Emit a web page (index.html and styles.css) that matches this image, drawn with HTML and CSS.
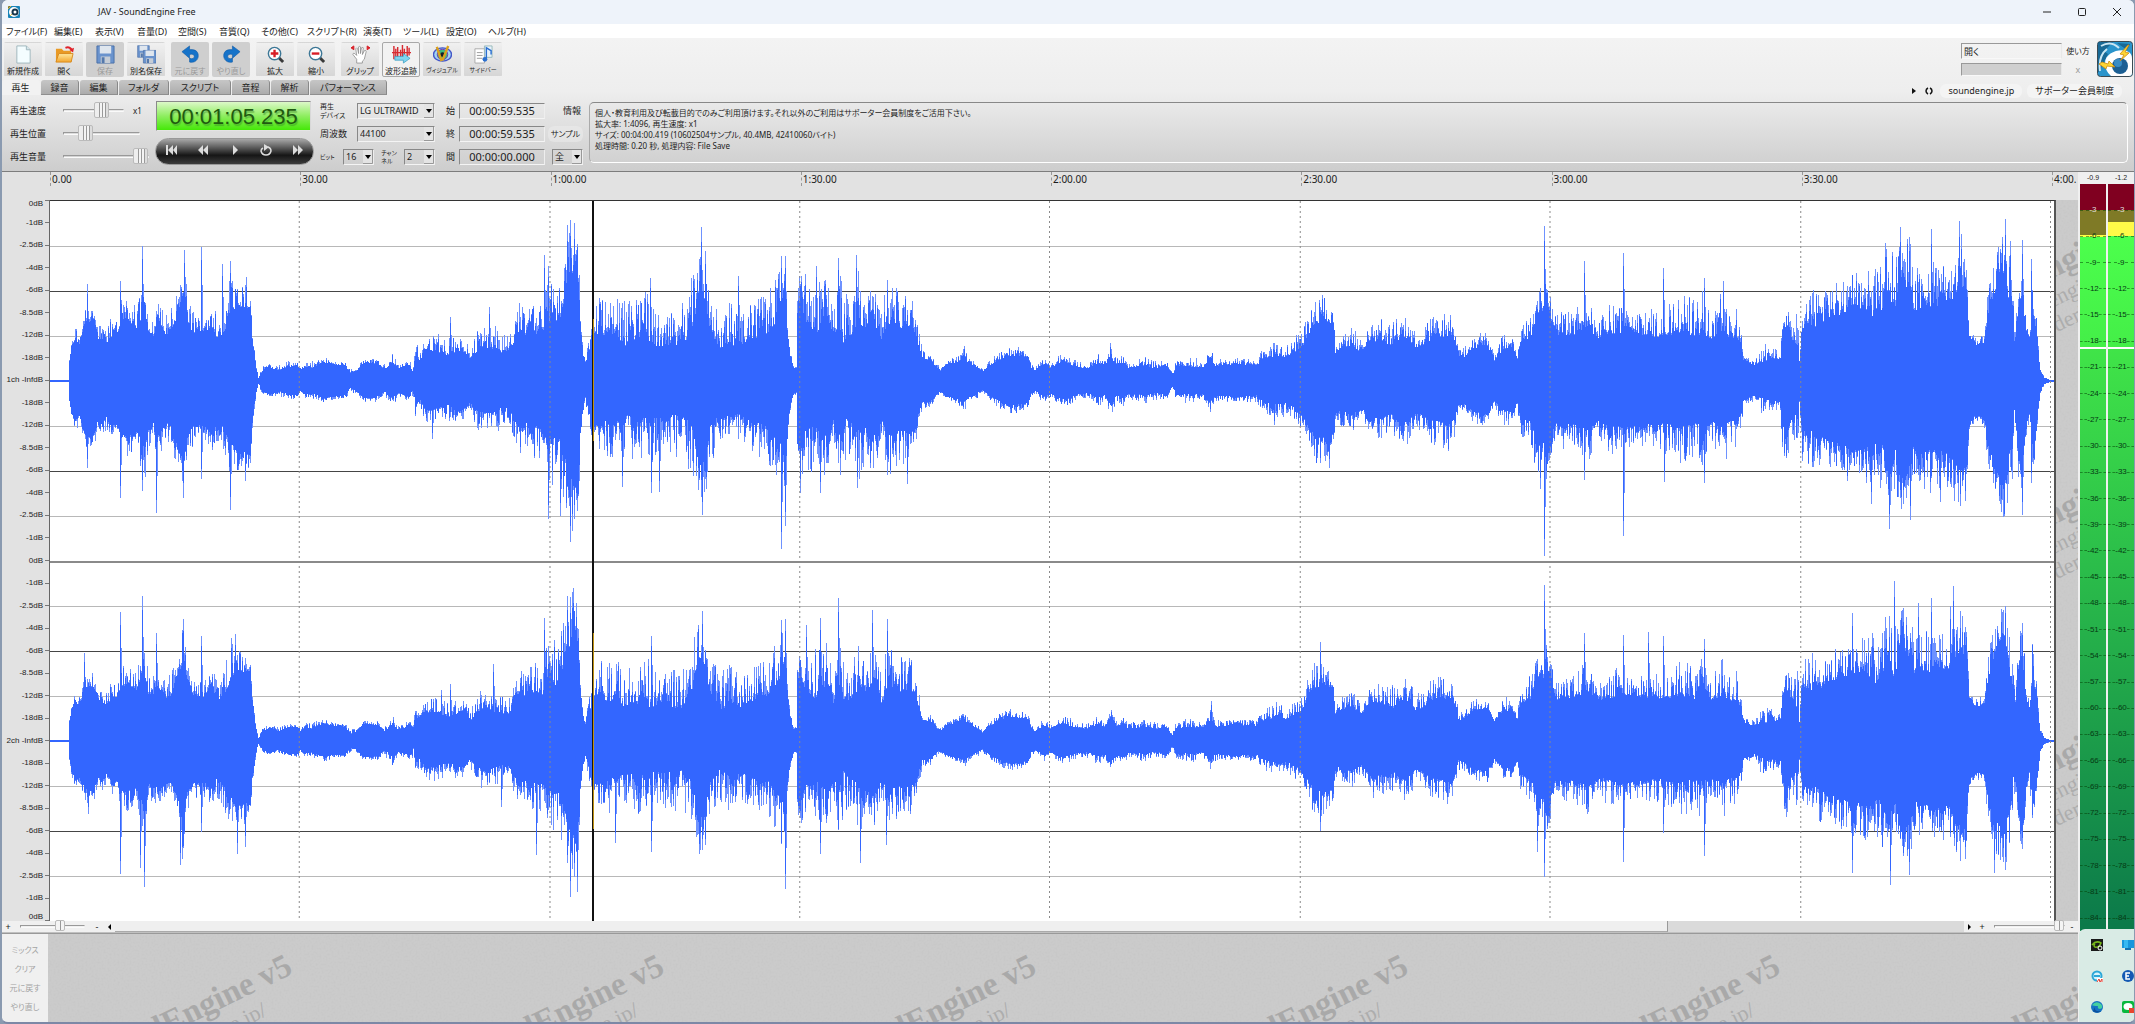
FILE: index.html
```html
<!DOCTYPE html>
<html lang="ja">
<head>
<meta charset="utf-8">
<title>JAV - SoundEngine Free</title>
<link rel="stylesheet" href="styles.css">
</head>
<body>
<svg class="defs" width="0" height="0" aria-hidden="true">
  <defs>
    <filter id="grain" x="0" y="0" width="100%" height="100%">
      <feTurbulence type="fractalNoise" baseFrequency="0.5" numOctaves="2" seed="4"/>
      <feColorMatrix type="matrix" values="0 0 0 0 0.55  0 0 0 0 0.55  0 0 0 0 0.55  1.4 0 0 0 -0.6"/>
    </filter>
    <linearGradient id="folder" x1="0" y1="0" x2="0" y2="1"><stop offset="0" stop-color="#ffe9a0"/><stop offset="1" stop-color="#f3a52c"/></linearGradient>
    <g id="mark">
      <g transform="rotate(-26)"><text class="mark-name" text-anchor="end">SoundEngine v5</text></g>
      <g transform="translate(-26 42) rotate(-26)"><text class="mark-url" text-anchor="end">http://soundengine.jp/</text></g>
      <g transform="translate(-4 58) rotate(-26)"><text class="mark-url" text-anchor="end">powered by coderium.com</text></g>
    </g>
    <g id="disk"><path d="M1 1h18v18H1z" fill="#6a93cd" stroke="#4a70a8"/><path d="M4 1h12v8H4z" fill="#dfe6ee"/><path d="M5 12h10v7H5z" fill="#c6cdd6"/><path d="M6 13h3v6H6z" fill="#5579ac"/></g>
  </defs>
</svg>

<div class="window">
  <header class="titlebar">
    <svg class="app-icon" viewBox="0 0 12 12"><rect width="12" height="12" rx="1" fill="#1883b8"/><circle cx="6" cy="6" r="5" fill="#fff"/><circle cx="7" cy="6" r="3.500" fill="#16354a"/><circle cx="7" cy="6" r="1.500" fill="#fff"/><path d="M0 3 3 0H0zM2 10l2-2" stroke="#d8b43a" fill="#0b3c55"/></svg>
    <h1 class="title">JAV - SoundEngine Free</h1>
    <div class="window-buttons">
      <button aria-label="最小化"><svg viewBox="0 0 10 10"><path d="M1 5h8"/></svg></button>
      <button aria-label="最大化"><svg viewBox="0 0 10 10"><rect x="1.500" y="1.500" width="7" height="7" rx="1"/></svg></button>
      <button aria-label="閉じる"><svg viewBox="0 0 10 10"><path d="m1 1 8 8M9 1 1 9"/></svg></button>
    </div>
  </header>

  <nav class="menu">
    <a href="#">ファイル(F)</a><a href="#">編集(E)</a><a href="#">表示(V)</a><a href="#">音量(D)</a><a href="#">空間(S)</a><a href="#">音質(Q)</a><a href="#">その他(C)</a><a href="#">スクリプト(R)</a><a href="#">演奏(T)</a><a href="#">ツール(L)</a><a href="#">設定(O)</a><a href="#">ヘルプ(H)</a>
  </nav>

  <div class="head">
    <div class="toolbar">
      <div class="tool-group">
        <button class="tool"><svg viewBox="0 0 20 20"><path d="M3 1h10l4 4v14H3z" fill="#f4fdff" stroke="#9fb6bd"/><path d="M13 1v4h4" fill="#d5e6ea" stroke="#9fb6bd"/></svg>新規作成</button>
        <button class="tool"><svg viewBox="0 0 20 20"><path d="M1 4h6l2 2h8v12H1z" fill="#e99a25"/><path d="m1 18 3-9h15l-2 9z" fill="url(#folder)" stroke="#d88a1d"/><path d="M11 3q5-2 7 3" fill="none" stroke="#e0222a" stroke-width="2"/><path d="m15 5 4 3 1-5z" fill="#e0222a"/></svg>開く</button>
        <button class="tool off" disabled><svg viewBox="0 0 20 20"><use href="#disk"/></svg>保存</button>
        <button class="tool"><svg viewBox="0 0 20 20"><use href="#disk" transform="scale(.68)"/><use href="#disk" transform="translate(6 5) scale(.74)"/></svg>別名保存</button>
      </div>
      <div class="tool-group">
        <button class="tool off" disabled><svg viewBox="0 0 20 20"><path d="m1 7 8-6v4c7-1 10 3 9 8-1 4-5 6-9 5v-4c3 1 5 0 5-2s-2-3-5-2v4z" fill="#1673c9" stroke="#0d58a6" stroke-width=".6"/></svg>元に戻す</button>
        <button class="tool off" disabled><svg viewBox="0 0 20 20"><path d="m19 7-8-6v4C4 4 1 8 2 13c1 4 5 6 9 5v-4c-3 1-5 0-5-2s2-3 5-2v4z" fill="#1673c9" stroke="#0d58a6" stroke-width=".6"/></svg>やり直し</button>
      </div>
      <div class="tool-group">
        <button class="tool"><svg viewBox="0 0 20 20"><path d="m13 13 5 5" stroke="#3a3a3a" stroke-width="3"/><circle cx="9" cy="9" r="6.500" fill="#fff" stroke="#3d7796" stroke-width="1.500"/><path d="M9 5v8M5 9h8" stroke="#d81e26" stroke-width="2.500"/></svg>拡大</button>
        <button class="tool"><svg viewBox="0 0 20 20"><path d="m13 13 5 5" stroke="#3a3a3a" stroke-width="3"/><circle cx="9" cy="9" r="6.500" fill="#fff" stroke="#3d7796" stroke-width="1.500"/><path d="M5 9h8" stroke="#d81e26" stroke-width="2.500"/></svg>縮小</button>
      </div>
      <div class="tool-group">
        <button class="tool"><svg viewBox="0 0 20 20"><path d="M6 19v-4L2 10q0-2 2-1l2 2-1-7q1-2 2 0l1 5V2q1-1 2 0v7l1-6q2-1 2 0l-1 7 2-4q2-1 2 1l-2 8-2 2v2z" fill="#fff" stroke="#888" stroke-width=".8"/><path d="m0 3 3-2v4zM20 3l-3-2v4z" fill="#d81e26" stroke="#d81e26"/></svg>グリップ</button>
        <button class="tool on"><svg viewBox="0 0 20 20"><path d="M0 8h20M2 1v14M4 4v9M6 2v13M9 5v8M11 0v15M13 4v7M16 1v12M18 3v8" stroke="#d62a30" stroke-width="1.500"/><path d="M3 12h9V9l7 5-7 5v-3H3z" fill="#7fd4ef" stroke="#3c9ec4" stroke-width=".8"/></svg>波形追跡</button>
        <button class="tool"><svg viewBox="0 0 20 20"><ellipse cx="10" cy="10" rx="9.500" ry="7" fill="#9fd3f0" stroke="#4456c8" stroke-width="1.500"/><circle cx="10" cy="10" r="5.500" fill="#3dbb7c" stroke="#7b2fb0"/><circle cx="10" cy="10" r="2.500" fill="#14202c"/><path d="m4 2 5 15M16 1l-6 15" stroke="#dba11c" stroke-width="2.500"/></svg><span class="tiny">ヴィジュアル</span></button>
        <button class="tool"><svg viewBox="0 0 20 20"><path d="M1 4h10v15H1z" fill="#fff" stroke="#aaa"/><path d="M3 8h6M3 11h6M3 14h6" stroke="#999"/><path d="M11 1h8v12h-8z" fill="#e8f2fb" stroke="#9bb"/><path d="M13 15V3l5 3v4" fill="none" stroke="#2a6fd0" stroke-width="1.500"/><circle cx="11.500" cy="15" r="2.500" fill="#2a6fd0"/></svg><span class="tiny">サイドバー</span></button>
      </div>
      <div class="status">
        <div class="status-grid">
          <output class="status-text">開く</output><button class="pill">使い方</button>
          <div class="status-bar"></div><button class="cancel" disabled>x</button>
        </div>
        <svg class="logo" viewBox="0 0 36 36"><rect x=".5" y=".5" width="35" height="35" rx="3" fill="#2a94cb" stroke="#3c4a52"/><path d="M1 1h15L7 10l4 3-9 18H1zM20 2l13 1-3 6z" fill="#12577d" opacity=".7"/><path d="M4 5q10-6 18 2M3 30Q1 15 10 8" fill="none" stroke="#c9e6f3" stroke-width="2"/><path d="M8 22C8 8 36 4 35 18v14q0 3-3 3H14q-6-5-6-13z" fill="#fff"/><circle cx="23" cy="25" r="8" fill="#1c5f93"/><circle cx="21" cy="22" r="4" fill="#3a8cc4"/><path d="m31 4-8 9 4 1-4 6 9-8-4-1 4-7zM5 21l6 2 1-3 6 6-8-1-1 3-7-5z" fill="#ffd534" stroke="#cc8a12" stroke-width=".8"/></svg>
      </div>
    </div>

    <div class="tabs-row">
      <div class="tabs" role="tablist">
        <button class="tab current" role="tab" aria-selected="true">再生</button><button class="tab" role="tab">録音</button><button class="tab" role="tab">編集</button><button class="tab" role="tab">フォルダ</button><button class="tab" role="tab">スクリプト</button><button class="tab" role="tab">音程</button><button class="tab" role="tab">解析</button><button class="tab" role="tab">パフォーマンス</button>
      </div>
      <div class="links">
        <button aria-label="次へ"><svg viewBox="0 0 8 8"><path d="m2 1 4 3-4 3z" fill="#111"/></svg></button>
        <button aria-label="更新"><svg viewBox="0 0 8 8"><path d="M3 1Q1 2 1 4t2 3M5 1q2 1 2 3T5 7" fill="none" stroke="#111" stroke-width="1.500"/></svg></button>
        <a href="#" class="pill wide">soundengine.jp</a>
        <a href="#" class="pill wide">サポーター会員制度</a>
      </div>
    </div>

    <section class="panel">
      <div class="sliders">
        <label for="speed">再生速度</label><div class="slide"><input id="speed" type="range" value="68"><span class="factor">x1</span></div>
        <label for="pos">再生位置</label><div class="slide"><input id="pos" type="range" value="23"></div>
        <label for="vol">再生音量</label><div class="slide"><input id="vol" type="range" value="100"></div>
      </div>
      <div class="player">
        <output class="lcd">00:01:05.235</output>
        <div class="transport">
          <button aria-label="先頭へ"><svg viewBox="0 0 12 12"><path d="M1 1h2v10H1zM8 1v10L3 6zM12 1v10L8 6z"/></svg></button>
          <button aria-label="巻き戻し"><svg viewBox="0 0 12 12"><path d="M6 1v10L1 6zM11 1v10L6 6z"/></svg></button>
          <button aria-label="再生"><svg viewBox="0 0 12 12"><path d="m4 1 5 5-5 5z"/></svg></button>
          <button aria-label="リピート"><svg viewBox="0 0 12 12"><path d="M8 3q3 1 3 4-1 4-5 4T1 7q0-2 2-3" fill="none" stroke="#ddd" stroke-width="1.500"/><path d="M4 0v7l5-4z"/></svg></button>
          <button aria-label="早送り"><svg viewBox="0 0 12 12"><path d="m1 1 5 5-5 5zM6 1l5 5-5 5z"/></svg></button>
        </div>
      </div>
      <div class="device">
        <label class="two" for="dev">再生<br>デバイス</label><select id="dev"><option>LG ULTRAWID</option></select>
        <label for="rate">周波数</label><select id="rate"><option>44100</option></select>
        <label class="two" for="bit">ビット</label><div class="pair"><select id="bit"><option>16</option></select><label class="two" for="ch">チャン<br>ネル</label><select id="ch"><option>2</option></select></div>
      </div>
      <div class="range">
        <label for="t1">始</label><input id="t1" value="00:00:59.535"><span>情報</span>
        <label for="t2">終</label><input id="t2" value="00:00:59.535"><button class="pill">サンプル</button>
        <label for="t3">間</label><input id="t3" value="00:00:00.000"><select class="all" aria-label="範囲"><option>全</option></select>
      </div>
      <div class="info">
        <p>個人・教育利用及び転載目的でのみご利用頂けます。それ以外のご利用はサポーター会員制度をご活用下さい。</p>
        <p>拡大率: 1:4096, 再生速度: x1</p>
        <p>サイズ: 00:04:00.419 (10602504サンプル, 40.4MB, 42410060バイト)</p>
        <p>処理時間: 0.20 秒, 処理内容: File Save</p>
      </div>
    </section>
  </div>

  <main class="work">
    <div class="left">
      <div class="editor">
        <ol class="scale">
          <li>0dB<li>-1dB<li>-2.5dB<li>-4dB<li>-6dB<li>-8.5dB<li>-12dB<li>-18dB<li>1ch -InfdB<li>-18dB<li>-12dB<li>-8.5dB<li>-6dB<li>-4dB<li>-2.5dB<li>-1dB<li>0dB<li>-1dB<li>-2.5dB<li>-4dB<li>-6dB<li>-8.5dB<li>-12dB<li>-18dB<li>2ch -InfdB<li>-18dB<li>-12dB<li>-8.5dB<li>-6dB<li>-4dB<li>-2.5dB<li>-1dB<li>0dB
        </ol>
        <ol class="ruler"><li>0.00<li>30.00<li>1:00.00<li>1:30.00<li>2:00.00<li>2:30.00<li>3:00.00<li>3:30.00<li>4:00.</ol>
        <svg class="plot" id="plot" viewBox="0 0 2006 720" preserveAspectRatio="none">
          <path class="g-mid" d="M0 45.500h2006M0 135.500h2006M0 225.500h2006M0 315.500h2006M0 405.500h2006M0 495.500h2006M0 585.500h2006M0 675.500h2006"/>
          <path class="g-six" d="M0 90.500h2006M0 270.500h2006M0 450.500h2006M0 630.500h2006"/>
          <path class="g-zero" d="M0 361h2006"/>
          <path class="w-fringe" id="fringe"/>
          <path class="w-body" id="body"/>
          <path class="g-time" d="M249.500 0v720M500.500 0v720M750.500 0v720M1000.500 0v720M1251.500 0v720M1501.500 0v720M1752.500 0v720M2002.500 0v720"/>
          <path class="playhead" d="M544 0v720"/>
          <path class="playhead-on" d="M544 118v122M544 432v196"/>
        </svg>
        <svg class="gutter"><rect width="100%" height="100%" filter="url(#grain)"/><use href="#mark" x="100" y="28"/><use href="#mark" x="100" y="275"/><use href="#mark" x="100" y="522"/><use href="#mark" x="100" y="769"/></svg>
      </div>
      <div class="hbar">
        <button>+</button><input type="range" class="zoom-y" value="64" aria-label="縦ズーム"><button>-</button><button aria-label="左へ"><svg viewBox="0 0 8 8"><path d="M6 1v6L3 4z"/></svg></button>
        <div class="trough"><div class="grip"></div></div>
        <button aria-label="右へ"><svg viewBox="0 0 8 8"><path d="M2 1v6l3-3z"/></svg></button><button>+</button><input type="range" class="zoom-x" value="100" aria-label="横ズーム"><button>-</button>
      </div>
      <div class="mix">
        <div class="mix-buttons"><button disabled>ミックス</button><button disabled>クリア</button><button disabled>元に戻す</button><button disabled>やり直し</button></div>
        <svg class="mix-view"><rect width="100%" height="100%" filter="url(#grain)"/><use href="#mark" x="246" y="39"/><use href="#mark" x="618" y="39"/><use href="#mark" x="990" y="39"/><use href="#mark" x="1362" y="39"/><use href="#mark" x="1734" y="39"/><use href="#mark" x="2106" y="39"/></svg>
      </div>
    </div>
    <div class="meters">
      <div class="meter"><span class="peak">-0.9</span><ol class="levels low"></ol></div>
      <div class="meter"><span class="peak">-1.2</span><ol class="levels high"></ol></div>
    </div>
  </main>

  <aside class="tray">
    <svg viewBox="0 0 12 12"><path d="M0 0h12v12H0z" fill="#191919"/><path d="M1 6q4-5 9-2-2 5-6 4-2-1 0-3" fill="none" stroke="#78b81c" stroke-width="1.500"/><circle cx="9" cy="9" r="2" fill="none" stroke="#fff"/></svg>
    <svg viewBox="0 0 12 12"><path d="M0 1h12v8H0z" fill="#1796dc"/><path d="M2 1h4v8H2z" fill="#35b8f2"/><path d="M3 9h6v2H3z" fill="#1471b0"/></svg>
    <svg viewBox="0 0 12 12"><circle cx="6" cy="6" r="4.500" fill="#d7f3fb" stroke="#2ba7d8" stroke-width="2"/><path d="M3 6h6" stroke="#2ba7d8" stroke-width="2"/><path d="M6 8h6v4H6z" fill="#fff"/><path d="m6 12 2-3 1 3 2-3v3" fill="none" stroke="#e23a2e"/></svg>
    <svg viewBox="0 0 12 12"><circle cx="6" cy="6" r="6" fill="#1459b3"/><path d="M8 3H4v6h4M4 6h3" fill="none" stroke="#fff" stroke-width="1.500"/></svg>
    <svg viewBox="0 0 12 12"><circle cx="6" cy="6" r="6" fill="#1572c4"/><path d="M1 4q4-5 9-1 3 4-1 5-3 0-2-3-5 0-6-1" fill="#45cfa0"/><path d="M4 6q-1 5 6 4-4 3-8 0" fill="#0b4f9b"/></svg>
    <svg viewBox="0 0 12 12"><rect width="12" height="12" rx="2" fill="#09b83e"/><ellipse cx="6" cy="5.500" rx="4.500" ry="3.500" fill="#fff"/><path d="M7 7h5v5H7z" fill="#e8452e"/></svg>
  </aside>
</div>
<script src="wave.js"></script>
</body>
</html>
```
FILE: styles.css
```css
* { box-sizing: border-box; }
body {
  margin: 0;
  height: 100vh;
  background: #8a9ab0;
  font: 9px/12px "Noto Sans", "Noto Sans CJK JP", sans-serif;
  font-feature-settings: "palt";
  color: #1c1c1c;
  overflow: hidden;
}
button, input, select { font: inherit; font-feature-settings: inherit; color: inherit; margin: 0; padding: 0; border: 0; background: none; border-radius: 0; }
a { color: inherit; text-decoration: none; }
ol { list-style: none; margin: 0; padding: 0; }
p { margin: 0; }
.defs { position: absolute; }

.window {
  position: relative;
  display: flex;
  flex-direction: column;
  height: 100vh;
  margin: 0 1px 0 2px;
  border-radius: 6px;
  overflow: hidden;
  background: #f0f0f0;
  border-bottom: 2px solid #7c88a6;
}

/* title bar and menu */
.titlebar { display: flex; align-items: center; flex: none; height: 24px; padding: 0 6px; background: #eef3fa; }
.app-icon { width: 12px; height: 12px; }
.title { flex: 1; margin: 0 0 0 78px; font-size: 9px; font-weight: 400; }
.window-buttons { display: flex; gap: 23px; padding-right: 5px; }
.window-buttons button { width: 12px; height: 12px; }
.window-buttons svg { display: block; width: 10px; height: 10px; margin: 1px; fill: none; stroke: #222; }
.menu {
  display: grid;
  flex: none;
  grid-template-columns: 48px 41px 42px 41px 41px 42px 46px 56px 40px 43px 42px 40px;
  height: 14px;
  padding-left: 4px;
  background: #fff;
  line-height: 15px;
  white-space: nowrap;
}

/* header */
.head { flex: none; background: linear-gradient(#f3f3f3, #eee 40%, #cdcdcd); border-bottom: 1px solid #7d7d7d; }
.toolbar { display: flex; gap: 6px; height: 42px; padding: 4px 1px 3px 2px; }
.tool-group { display: flex; gap: 3px; }
.tool {
  display: flex;
  flex-direction: column;
  align-items: center;
  gap: 1px;
  width: 38px;
  height: 35px;
  padding-top: 2px;
  background: linear-gradient(#f0f0f0, #d6d6d6);
  border: 1px solid transparent;
  border-radius: 2px;
  font-size: 8px;
  line-height: 11px;
  white-space: nowrap;
}
.tool svg { width: 19px; height: 19px; flex: none; }
.tool.off { background: #cfcfcf; color: #9a9a9a; }
.tool.on { border-color: #a8a8a8; background: #f2f2f2; }
.tiny { font-size: 6px; }
.status { display: flex; gap: 4px; margin-left: auto; }
.status-grid { display: grid; grid-template-columns: 101px 30px; grid-template-rows: 16px 13px; gap: 4px 1px; align-items: center; padding-top: 1px; }
.status-text, .status-bar { align-self: stretch; border: 1px solid; border-color: #999 #e8e8e8 #f8f8f8 #999; padding-left: 2px; line-height: 15px; }
.status-bar { background: #cfcfcf; }
.pill { border-radius: 6px; background: #f4f4f4; font-size: 8px; text-align: center; white-space: nowrap; }
.cancel { color: #999; }
.logo { width: 36px; height: 36px; margin-top: -1px; }

.tabs-row { display: flex; justify-content: space-between; height: 15px; }
.tabs { display: flex; gap: 1px; }
.tab { height: 15px; min-width: 38px; background: linear-gradient(#c6c6c6, #acacac); border-right: 1px solid #888; border-bottom: 1px solid #8f8f8f; border-radius: 3px 3px 0 0; line-height: 13px; }
.tab.current { background: #f2f2f2; border-color: transparent; }
.tab:nth-child(4) { min-width: 50px; }
.tab:nth-child(5) { min-width: 61px; }
.tab:nth-child(8) { min-width: 77px; }
.links { display: flex; align-items: center; gap: 5px; padding-right: 12px; height: 22px; }
.links button { width: 10px; height: 8px; }
.links svg { display: block; width: 8px; height: 8px; }
.pill.wide { padding: 1px 8px; font-size: 9px; }

/* playback panel */
.panel { display: flex; height: 76px; padding: 4px 6px 0 8px; }
.sliders, .device, .range { display: grid; grid-template-rows: repeat(3, 23px); align-items: center; align-content: start; white-space: nowrap; }
.sliders { grid-template-columns: 53px 92px; }
.slide { display: flex; align-items: center; gap: 9px; }
.factor { font-size: 8px; }
input[type="range"] { appearance: none; width: 77px; height: 16px; }
#speed { width: 61px; }
#vol { width: 86px; }
input[type="range"]::-webkit-slider-runnable-track { height: 3px; border: 1px solid; border-color: #999 #eee #fafafa #999; }
input[type="range"]::-webkit-slider-thumb { appearance: none; width: 15px; height: 16px; margin-top: -8px; background: linear-gradient(90deg, #eee 4px, #999 4px 5px, #f4f4f4 5px 7px, #999 7px 8px, #f4f4f4 8px 10px, #999 10px 11px, #ddd 11px); border: 1px solid #bbb; border-radius: 2px; }
.player { width: 159px; }
.lcd {
  display: block;
  height: 30px;
  margin: 2px 3px 7px 1px;
  border: 1px solid;
  border-color: #8a8a8a #d8d8d8 #e4e4e4 #8a8a8a;
  background: linear-gradient(#dcf8c8, #8eee60 50%, #45e808);
  color: #1f5a10;
  font: 22px/30px "Liberation Sans", sans-serif;
  text-align: center;
  text-shadow: 1px 2px 1px #3a8a2880;
}
.transport { display: flex; justify-content: space-between; align-items: center; height: 27px; padding: 0 9px 3px; border-radius: 14px; background: linear-gradient(#a8a8a8, #5a5a5a 35%, #161616 65%, #3c3c3c); border: 1px solid #999; }
.transport button { width: 12px; height: 12px; }
.transport svg { display: block; fill: #ddd; }
.device { grid-template-columns: 37px 78px; margin-left: 6px; }
.device .two { font-size: 7px; line-height: 9px; }
.device .two[for="bit"], .device .two[for="ch"] { font-size: 6px; line-height: 8px; }
.pair { display: flex; align-items: center; justify-content: space-between; margin-left: -14px; }
select {
  appearance: none;
  height: 16px;
  padding: 0 11px 0 2px;
  border: 1px solid;
  border-color: #888 #eee #f4f4f4 #888;
  background: url("data:image/svg+xml,%3Csvg xmlns='http://www.w3.org/2000/svg' width='10' height='14'%3E%3Cpath d='M0 0h10v14H0z' fill='%23e4e4e4'/%3E%3Cpath d='M9.500 0v13.500H0' fill='none' stroke='%23999'/%3E%3Cpath d='M2 5h6L5 9z'/%3E%3C/svg%3E") right center no-repeat;
  font-size: 9px;
  line-height: 14px;
}
.pair select { width: 31px; }
.range { grid-template-columns: 13px 86px 38px; margin-left: 11px; }
.range input { width: 86px; height: 16px; border: 1px solid; border-color: #888 #eee #f4f4f4 #888; font-size: 11px; text-align: center; }
.range span { padding-left: 18px; }
.range .pill { height: 16px; margin-left: 3px; background: #ededed80; }
.range .all { width: 31px; margin-left: 7px; }
.info { flex: 1; height: 61px; margin: 3px 0 0 6px; padding: 4px 5px; border: 1px solid #fff; border-top-color: #888; border-left-color: #aaa; border-radius: 5px; font-size: 8px; line-height: 11px; }

/* editor */
.work { flex: 1; display: grid; grid-template-columns: 1fr 56px; min-height: 0; }
.left { display: flex; flex-direction: column; min-width: 0; min-height: 0; }
.editor { flex: 1; display: grid; grid-template-columns: 48px 1fr 22px; grid-template-rows: 28px 1fr; min-height: 0; background: #e2e2e2; }
.scale { grid-row: 2; display: flex; flex-direction: column; border-right: 1px solid #666; font: 8px/8px "Liberation Sans", sans-serif; }
.scale li { flex: 2 0 0; display: flex; align-items: center; justify-content: flex-end; white-space: nowrap; }
.scale li::after { content: ""; width: 4px; margin-left: 2px; border-top: 1px solid #777; }
.scale li:first-child { flex-grow: 1; align-items: flex-start; }
.scale li:last-child { flex-grow: 1; align-items: flex-end; }
.ruler { grid-column: 2 / 4; grid-row: 1; display: grid; grid-template-columns: repeat(8, 1fr) 26px; font-size: 10px; line-height: 15px; overflow: hidden; }
.ruler li { height: 14px; padding-left: 1px; border-left: 1px dashed #999; white-space: nowrap; }
.plot { grid-column: 2; grid-row: 2; width: 100%; height: 100%; background: #fff; border-top: 1px solid #333; border-right: 2px solid #555; shape-rendering: crispEdges; fill: none; }
.g-mid { stroke: #b8b8b8; }
.g-six { stroke: #444; }
.g-zero { stroke: #8a8a8a; stroke-width: 2px; }
.g-time { stroke: #8a8a8a; stroke-dasharray: 2px 3px; }
.w-fringe { fill: #6e92ff; }
.w-body { fill: #3366ff; }
.playhead { stroke: #111; stroke-width: 2px; }
.playhead-on { stroke: #c99a14; stroke-width: 1px; }
.gutter, .mix-view { background: #cbcbcb; }
.gutter { grid-column: 3; grid-row: 2; width: 22px; height: 100%; }
.mark-name { font: bold 33px "Liberation Serif", serif; fill: #a9a9a9; }
.mark-url { font: 22px "Liberation Serif", serif; fill: #adadad; }

.hbar { display: flex; align-items: center; flex: none; height: 12px; border-bottom: 1px solid #c0c0c0; }
.hbar button { width: 12px; height: 11px; line-height: 11px; }
.hbar svg { display: block; width: 8px; height: 8px; margin: 1px auto; }
.hbar input { width: 65px; height: 11px; margin: 0 6px; }
.hbar .zoom-x { width: 71px; margin: 0 1px 0 6px; }
.hbar input::-webkit-slider-thumb { width: 10px; height: 11px; margin-top: -6px; background: linear-gradient(90deg, #f4f4f4 4px, #999 4px 5px, #f4f4f4 5px); }
.trough { flex: 1; height: 11px; background: #dadada; }
.grip { width: 84%; height: 11px; background: #efefef; border-right: 1px solid #999; border-bottom: 1px solid #aaa; }
.mix { flex: none; display: flex; height: 89px; border-top: 1px solid #999; }
.mix-buttons { display: flex; flex-direction: column; gap: 7px; width: 46px; padding-top: 10px; }
.mix-buttons button { color: #a4a4a4; font-size: 8px; }
.mix-view { flex: 1; height: 88px; min-width: 0; }

/* level meters */
.meters { display: grid; grid-template-columns: 1fr 1fr; gap: 2px; padding: 0 0 91px 2px; }
.meter { display: flex; flex-direction: column; }
.peak { height: 12px; font: 7px/12px "Liberation Sans", sans-serif; text-align: center; }
.levels { flex: 1; display: flex; flex-direction: column; padding-top: 13px; color: #063a14; font: 8px/8px "Liberation Sans", sans-serif; }
.levels li { flex: 1; display: flex; align-items: center; }
.levels li:first-child { color: #ddd; }
.levels li::before, .levels li::after { content: ""; flex: 1; border-top: 1px dashed #00400080; }
.levels.low { background: linear-gradient(#800020 26px, #7f7a26 26px 51px, #ff4 51px 53px, #4cff4c 53px, #44ee48 163px, #fff 163px 165px, #40e448 165px, #2cbf4a 370px, #0c7a4a 740px); }
.levels.high { background: linear-gradient(#800020 26px, #7f7a26 26px 38px, #fffa48 38px 52px, #4cff4c 52px, #44ee48 163px, #fff 163px 165px, #40e448 165px, #2cbf4a 370px, #0c7a4a 740px); }

/* notification flyout lying over the meters */
.tray { position: absolute; right: 0; bottom: 0; width: 55px; height: 93px; padding: 10px 0 0 12px; display: grid; grid-template-columns: 12px 12px; grid-template-rows: repeat(3, 12px); gap: 19px; background: #d9ebe5; border-radius: 6px 0 0 0; }
.tray svg { width: 12px; height: 12px; }
```
FILE: wave.js
```js
// Envelope points: x, sustained level, peak level (all in plot units, 180 = full scale)
const ENV = `18 0 0,19 20 22,21 33 37,25 42 55,29 34 48,34 55 68,43 57 72,47 43 60,56 38 52,63 46 66,67 46 56,71 58 82,80 57 78,86 53 72,91 62 98,94 72 110,98 50 70,104 44 66,107 58 80,114 48 68,118 42 66,124 56 80,130 75 92,133 88 125,137 58 85,142 48 68,152 46 60,161 54 72,167 42 66,174 48 78,181 66 105,187 75 92,196 72 100,200 74 84,202 42 48,204 23 30,206 11 14,208 3 4,212 10 14,219 14 16,228 10 15,237 14 19,247 15 18,250 10 13,255 14 18,262 13 19,273 18 24,283 16 19,295 15 18,300 7 13,306 10 13,313 18 21,326 17 22,334 11 18,342 17 27,348 12 16,359 16 21,363 8 18,365 24 38,370 20 30,375 30 42,384 30 46,393 26 44,400 25 42,408 30 42,415 28 40,420 21 30,426 29 50,434 34 54,442 32 55,450 28 50,458 28 44,464 40 62,469 50 75,476 44 66,480 55 78,486 46 82,492 48 78,496 54 95,505 60 110,510 60 102,514 70 125,518 95 145,523 105 155,527 115 140,530 80 125,531 55 60,534 25 30,536 17 20,539 28 42,545 46 70,551 48 84,556 42 78,566 44 85,576 34 76,586 40 82,601 36 88,611 34 74,621 36 82,632 34 76,642 44 100,650 88 130,656 80 120,660 48 84,670 33 74,680 36 78,690 34 70,700 42 74,710 44 80,720 46 88,728 62 105,733 68 120,736 100 125,738 50 60,741 25 30,744 13 15,747 12 15,748 62 80,751 70 115,756 52 95,765 44 95,771 50 98,778 60 102,784 38 64,789 60 110,794 34 90,801 44 85,807 48 115,812 56 105,816 50 75,823 62 100,833 38 76,838 58 98,850 52 88,861 54 88,866 48 66,869 35 55,873 22 30,881 21 27,888 12 16,891 10 13,896 16 18,908 19 25,915 21 33,920 17 22,928 13 18,933 9 12,938 14 18,948 20 27,959 25 33,967 25 34,979 23 27,982 13 16,986 10 14,994 16 24,1001 13 17,1013 19 27,1021 16 24,1030 13 18,1039 13 19,1049 18 28,1055 15 20,1061 24 38,1067 15 22,1074 18 26,1079 13 18,1097 15 24,1106 12 19,1117 15 20,1123 6 9,1127 14 20,1144 14 25,1153 13 17,1161 22 32,1166 15 22,1187 17 22,1207 15 22,1213 21 31,1227 25 40,1236 23 36,1247 29 45,1253 33 48,1257 42 60,1265 55 84,1273 60 86,1284 56 74,1286 28 40,1292 33 48,1303 34 54,1312 28 38,1321 40 54,1334 38 62,1343 34 58,1351 43 62,1358 43 70,1365 33 50,1375 35 52,1381 41 66,1391 43 66,1401 46 74,1406 38 54,1409 22 32,1417 25 35,1424 32 44,1438 35 48,1445 20 25,1453 30 46,1463 33 44,1468 22 28,1471 38 55,1482 44 70,1488 68 98,1494 66 90,1497 82 105,1502 60 84,1508 42 62,1514 48 72,1522 44 64,1531 48 74,1540 52 84,1548 42 56,1558 44 74,1569 48 75,1578 48 70,1590 47 66,1604 44 70,1618 44 72,1632 48 84,1645 44 80,1655 46 88,1663 42 64,1674 48 90,1682 42 70,1689 42 74,1693 34 50,1695 20 25,1707 15 20,1712 18 38,1720 20 34,1732 22 30,1734 46 70,1738 56 90,1744 38 62,1750 34 82,1751 20 24,1754 52 84,1771 54 96,1778 62 88,1792 66 98,1803 72 104,1817 72 112,1828 60 112,1834 66 122,1840 95 135,1846 62 120,1852 105 140,1862 85 138,1865 70 108,1876 74 114,1888 72 116,1901 76 114,1912 96 140,1918 88 120,1921 45 50,1927 36 42,1936 38 48,1939 62 84,1946 88 124,1956 108 142,1963 62 124,1966 30 60,1971 80 110,1974 84 130,1978 45 55,1981 35 45,1984 60 100,1988 52 62,1990 28 34,1992 10 13,1996 3 4,2002 1 1,2006 1 1`
  .split(",").map(s => s.split(" ").map(Number));

// Single loud transients for each side of each channel: x, level
const SIDES = [
  { mid: 180, dir: -1, gain: 1, spikes: [[37, 97], [70, 100], [92, 135], [134, 131], [151, 134], [172, 117], [180, 120], [196, 104], [400, 64], [439, 74], [494, 126], [498, 115], [518, 156], [521, 161], [525, 158], [601, 103], [652, 154], [656, 130], [689, 105], [732, 125], [736, 125], [756, 107], [767, 115], [789, 123], [807, 126], [838, 101], [915, 35], [1061, 38], [1495, 155], [1536, 120], [1575, 128], [1615, 113], [1656, 103], [1675, 100], [1837, 138], [1852, 154], [1861, 144], [1883, 152], [1911, 160], [1913, 147], [1957, 162], [1962, 140], [1974, 141], [1983, 122]] },
  { mid: 180, dir: 1, gain: .94, spikes: [[37, 87], [70, 117], [92, 110], [106, 132], [132, 100], [151, 98], [180, 129], [195, 100], [382, 58], [498, 138], [511, 135], [521, 161], [525, 138], [528, 130], [573, 106], [602, 112], [610, 111], [653, 134], [732, 168], [736, 145], [771, 112], [808, 107], [858, 103], [1225, 44], [1280, 87], [1491, 108], [1495, 175], [1536, 99], [1575, 155], [1616, 101], [1656, 102], [1823, 123], [1841, 148], [1862, 139], [1892, 121], [1912, 125], [1953, 131], [1974, 134], [1983, 102]] },
  { mid: 540, dir: -1, gain: .94, spikes: [[34, 88], [70, 129], [92, 145], [106, 108], [133, 122], [151, 105], [181, 103], [185, 107], [391, 51], [400, 57], [443, 77], [494, 123], [518, 145], [524, 153], [527, 138], [602, 105], [653, 130], [732, 121], [736, 122], [757, 116], [771, 123], [789, 143], [823, 131], [838, 122], [1162, 40], [1271, 99], [1495, 156], [1536, 108], [1575, 106], [1600, 109], [1615, 105], [1656, 102], [1804, 128], [1846, 160], [1870, 138], [1883, 143], [1902, 135], [1905, 155], [1953, 132], [1974, 118]] },
  { mid: 540, dir: 1, gain: .86, spikes: [[38, 73], [70, 133], [90, 127], [94, 146], [130, 124], [132, 118], [151, 91], [187, 113], [195, 106], [451, 66], [486, 114], [521, 156], [525, 136], [528, 151], [566, 102], [602, 111], [653, 109], [736, 148], [771, 113], [811, 122], [837, 104], [1271, 90], [1324, 57], [1488, 111], [1495, 136], [1575, 121], [1615, 92], [1656, 115], [1804, 132], [1842, 144], [1861, 134], [1917, 118], [1946, 132], [1957, 129], [1974, 108]] }
];

let seed = 20240;
const rnd = () => (seed = (seed * 1664525 + 1013904223) >>> 0) / 4294967296;

function levelAt(x) {
  let i = 1;
  while (ENV[i][0] < x) i++;
  const [x0, a0, b0] = ENV[i - 1], [x1, a1, b1] = ENV[i];
  const t = (x - x0) / (x1 - x0);
  return [a0 + (a1 - a0) * t, b0 + (b1 - b0) * t];
}

let fringe = "", body = "";
for (const side of SIDES) {
  const solid = [], tips = [];
  for (let x = 0; x < 2006; x++) {
    let [lo, hi] = x < 19 ? [1, 1] : levelAt(x);
    lo *= side.gain; hi *= side.gain * 1.04;
    const tip = lo + (hi - lo) * Math.pow(rnd(), 1.25);
    tips.push(Math.max(1, Math.round(tip)));
    solid.push(Math.max(1, Math.round(lo + (tip - lo) * Math.pow(rnd(), .6))));
  }
  for (const [x, v] of side.spikes) {
    tips[x] = v;
    solid[x] = Math.round(v * .9);
    tips[x + 1] = Math.max(tips[x + 1], Math.round(v * .72));
  }
  const path = a => `M0 ${side.mid}` + a.map((v, x) => `V${side.mid + side.dir * v}H${x + 1}`).join("") + `V${side.mid}z`;
  fringe += path(tips);
  body += path(solid);
}
document.getElementById("fringe").setAttribute("d", fringe);
document.getElementById("body").setAttribute("d", body);

// Meter graduations, every 3 dB
for (const list of document.querySelectorAll(".levels")) {
  for (let db = 3; db <= 84; db += 3) {
    const li = document.createElement("li");
    li.textContent = "-" + db;
    list.append(li);
  }
}
```
